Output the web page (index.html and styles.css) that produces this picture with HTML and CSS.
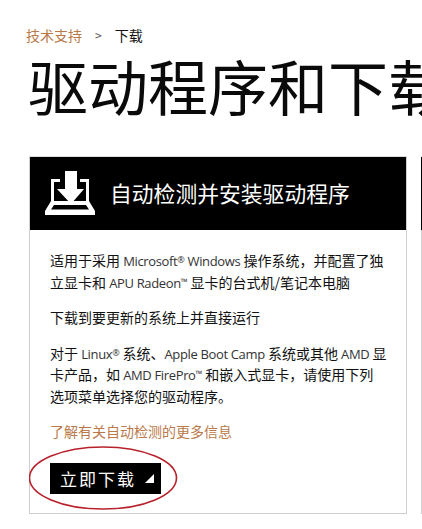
FILE: index.html
```html
<!DOCTYPE html>
<html lang="zh-CN">
<head>
  <meta charset="UTF-8" />
  <meta name="viewport" content="width=device-width, initial-scale=1.0" />
  <title>驱动程序和下载</title>
  <link rel="stylesheet" href="styles.css">
</head>
<body>
  <div class="breadcrumb">
    <a href="#">技术支持</a>
    <span class="sep">&gt;</span>
    <span>下载</span>
  </div>
  <h1>驱动程序和下载</h1>

  <div class="cards">
    <div class="card">
      <div class="card-header">
        <svg class="header-icon" viewBox="0 0 50 44" width="50" height="44">
          <path d="M15 9.5H7.5V31M35 9.5H42.5V31" fill="none" stroke="#fff" stroke-width="3"/>
          <path d="M6 30H44L50 40V44H0V40ZM9 34L6 38.500H44L41 34Z" fill="#fff" fill-rule="evenodd"/>
          <path d="M20 0H32V18H39L26 33L12 18H20Z" fill="#fff"/>
        </svg>
        <span>自动检测并安装驱动程序</span>
      </div>
      <div class="card-body">
        <p>适用于采用 <span class="latin">Microsoft<span class="mark">®</span> Windows</span> 操作系统，并配置了独<br>立显卡和 <span class="latin">APU Radeon<span class="mark">™</span></span> 显卡的台式机/笔记本电脑</p>
        <p>下载到要更新的系统上并直接运行</p>
        <p>对于 <span class="latin">Linux<span class="mark">®</span></span> 系统、<span class="latin">Apple Boot Camp</span> 系统或其他 <span class="latin">AMD</span> 显<br>卡产品，如 <span class="latin">AMD FirePro<span class="mark">™</span></span> 和嵌入式显卡，请使用下列<br>选项菜单选择您的驱动程序。</p>
        <p><a href="#">了解有关自动检测的更多信息</a></p>
        <div class="download">
          <button class="download-btn">立即下载<i class="corner"></i></button>
          <svg class="circle" viewBox="0 0 150 66" width="150" height="66">
            <ellipse cx="75" cy="33" rx="73.5" ry="31" fill="none" stroke="#b8212b" stroke-width="1.6"/>
          </svg>
        </div>
      </div>
    </div>
    <div class="card card-next">
      <div class="card-header"></div>
    </div>
  </div>
</body>
</html>
```

FILE: styles.css
```css
html, body {
  overflow: hidden;
}

body {
  background-color: #ffffff;
  color: #111111;
  font-family: "Noto Sans CJK SC", sans-serif;
  margin: 0;
  padding: 0 0 0 26px;
  height: 529px;
}

a {
  color: #b9794a;
  text-decoration: none;
}

.breadcrumb {
  padding-top: 25px;
  font-size: 14px;
  line-height: 20px;
  display: flex;
  align-items: center;
}

.sep {
  margin: 0 13px;
  font-size: 12px;
  color: #555555;
}

h1 {
  margin: 5px 0 0 2px;
  font-size: 60px;
  line-height: 70px;
  font-weight: 400;
  white-space: nowrap;
  color: #0a0a0a;
  overflow: hidden;
}

.cards {
  display: flex;
  gap: 14px;
  margin: 36px 0 0 3px;
  overflow: hidden;
}

.card {
  flex: none;
  width: 378px;
  height: 358px;
  box-sizing: border-box;
  border: 1px solid #cfcfcf;
  border-top-color: #dcdcdc;
}

.card-header {
  background-color: #000000;
  height: 73px;
  box-sizing: border-box;
  display: flex;
  align-items: center;
  color: #ffffff;
  font-size: 21.8px;
  padding: 0 0 2px 15px;
}

.header-icon {
  margin-right: 15px;
  flex: none;
}

.card-next .card-header {
  margin-left: -1px;
}

.card-body {
  padding: 20px 0 0 20px;
  font-size: 14px;
  line-height: 21.5px;
}

.card-body p {
  margin: 0 0 14px;
  white-space: nowrap;
}

.latin {
  color: #333333;
  font-family: "Open Sans", sans-serif;
  font-size: 13px;
  letter-spacing: -0.35px;
  line-height: 1;
}

.mark {
  font-size: 9px;
  vertical-align: 3px;
  line-height: 0;
}

.download {
  position: relative;
  margin-top: 20px;
}

.download-btn {
  background-color: #000000;
  color: #ffffff;
  border: 0;
  width: 111px;
  height: 31px;
  padding: 0 0 0 10px;
  font-family: inherit;
  font-size: 17px;
  letter-spacing: 2px;
  display: flex;
  align-items: center;
}

.corner {
  margin-left: 9px;
  width: 0;
  height: 0;
  border-left: 9px solid transparent;
  border-bottom: 9px solid #ffffff;
}

.circle {
  position: absolute;
  left: -22px;
  top: -18px;
}
```
